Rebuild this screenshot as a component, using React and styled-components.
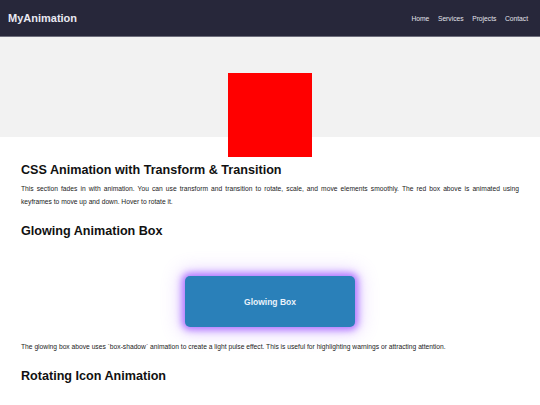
import React from "react";
import styled, { createGlobalStyle } from "styled-components";

const Global = createGlobalStyle`
  html, body { margin: 0; padding: 0; background: #ffffff; }
  body { font-family: "Liberation Sans", Arial, sans-serif; color: #111; }
  * { box-sizing: border-box; }
`;

const Header = styled.header`
  height: 37px;
  background: #27273a;
  border-bottom: 1px solid #6e6e7c;
  display: flex;
  align-items: center;
  justify-content: space-between;
  padding: 0 12px 0 8px;
`;

const Logo = styled.div`
  font-size: 11px;
  font-weight: 700;
  color: #e9e9f2;
`;

const Nav = styled.nav`
  display: flex;
  gap: 8.6px;
`;

const NavLink = styled.a`
  font-size: 6.7px;
  color: #e4e4ec;
  text-decoration: none;
`;

const Hero = styled.div`
  height: 100px;
  background: #f2f2f2;
  display: flex;
  align-items: center;
  justify-content: center;
`;

const RedBox = styled.div`
  width: 84px;
  height: 84px;
  background: #ff0000;
  transform: translateY(28px);
`;

const Section = styled.section`
  padding: 9px 21px 40px;
`;

const Heading = styled.h2`
  margin: 16.5px 0 4px;
  font-size: 12.6px;
  line-height: 15px;
  font-weight: 700;
  color: #111;
`;

const Text = styled.p`
  margin: 0;
  font-size: 6.7px;
  line-height: 13px;
  color: #222;
  text-align: ${(p) => (p.$justify ? "justify" : "left")};
`;

const GlowWrap = styled.div`
  display: flex;
  justify-content: center;
  padding: 33px 0 12.5px;
`;

const GlowBox = styled.div`
  width: 170px;
  height: 51px;
  border-radius: 5px;
  background: #2a80b9;
  display: flex;
  align-items: center;
  justify-content: center;
  font-size: 8.5px;
  font-weight: 700;
  color: #eaf2fb;
  box-shadow: 0 0 7px 3px rgba(160, 90, 255, 0.8), 0 0 18px 6px rgba(175, 120, 255, 0.3);
`;

const IconWrap = styled.div`
  display: flex;
  justify-content: center;
  padding: 20px 0;
`;

export default function App() {
  return (
    <>
      <Global />
      <Header>
        <Logo>MyAnimation</Logo>
        <Nav>
          <NavLink href="#">Home</NavLink>
          <NavLink href="#">Services</NavLink>
          <NavLink href="#">Projects</NavLink>
          <NavLink href="#">Contact</NavLink>
        </Nav>
      </Header>
      <Hero>
        <RedBox />
      </Hero>
      <Section>
        <Heading>CSS Animation with Transform &amp; Transition</Heading>
        <Text $justify>
          This section fades in with animation. You can use transform and transition to rotate, scale, and move
          elements smoothly. The red box above is animated using keyframes to move up and down. Hover to rotate it.
        </Text>
        <Heading>Glowing Animation Box</Heading>
        <GlowWrap>
          <GlowBox>Glowing Box</GlowBox>
        </GlowWrap>
        <Text>
          The glowing box above uses `box-shadow` animation to create a light pulse effect. This is useful for
          highlighting warnings or attracting attention.
        </Text>
        <Heading>Rotating Icon Animation</Heading>
        <IconWrap>
          <svg width="40" height="40" viewBox="0 0 24 24" fill="none" stroke="#2a80b9" strokeWidth="2">
            <circle cx="12" cy="12" r="3" />
            <circle cx="12" cy="12" r="8" />
          </svg>
        </IconWrap>
      </Section>
    </>
  );
}
